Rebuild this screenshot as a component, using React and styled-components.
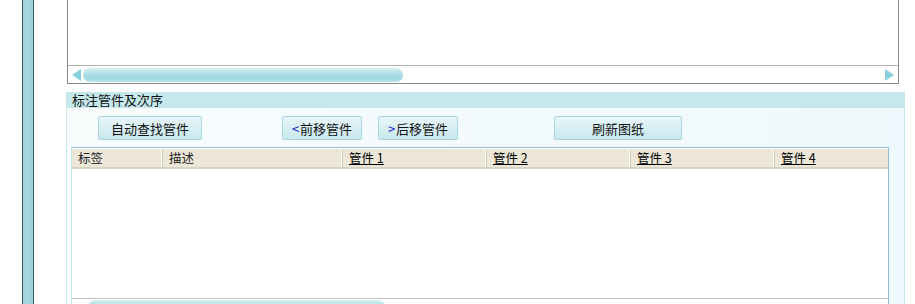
import styled, { createGlobalStyle } from 'styled-components'

const GlobalStyle = createGlobalStyle`
  html, body {
    margin: 0;
    padding: 0;
    background: #fff;
    font-family: "Noto Sans CJK SC", "Noto Sans", sans-serif;
    overflow: hidden;
  }
`

const columns = [
  { title: '标签', width: 91 },
  { title: '描述', width: 180 },
  { title: '管件 1', width: 144, link: true },
  { title: '管件 2', width: 144, link: true },
  { title: '管件 3', width: 144, link: true },
  { title: '管件 4', width: 113, link: true },
]

const buttons = [
  { label: '自动查找管件', width: 104, before: 31 },
  { label: '前移管件', width: 80, before: 80, arrow: '<' },
  { label: '后移管件', width: 80, before: 16, arrow: '>' },
  { label: '刷新图纸', width: 128, before: 96 },
]

export default function App() {
  return (
    <Page>
      <GlobalStyle />
      <SideStrip />
      <Main>
        <TopPanel>
          <Canvas />
          <ScrollBar>
            <Arrow dir="left" />
            <Thumb width={320} />
            <Spacer />
            <Arrow dir="right" />
          </ScrollBar>
        </TopPanel>

        <Section>
          <SectionTitle>标注管件及次序</SectionTitle>
          <SectionBody>
            <ButtonRow>
              {buttons.map((b) => (
                <Button key={b.label} width={b.width} before={b.before}>
                  {b.arrow && <ArrowText>{b.arrow}</ArrowText>}
                  {b.label}
                </Button>
              ))}
            </ButtonRow>
            <Table>
              <HeaderRow>
                {columns.map((c) => (
                  <HeaderCell key={c.title} width={c.width} link={c.link}>
                    <span>{c.title}</span>
                  </HeaderCell>
                ))}
              </HeaderRow>
              <TableBody />
              <BottomScroll>
                <Thumb width={297} />
              </BottomScroll>
            </Table>
          </SectionBody>
        </Section>
      </Main>
    </Page>
  )
}

const Page = styled.div`
  display: flex;
  width: 915px;
  height: 304px;
  overflow: hidden;
  background: #fff;
`

const SideStrip = styled.div`
  width: 10px;
  margin-left: 22px;
  border-left: 1px solid #3f5f66;
  border-right: 1px solid #3f5f66;
  background: linear-gradient(90deg, #9fd3da, #a6d8de 50%, #98cfd6);
`

const Main = styled.div`
  margin-left: 32px;
  width: 839px;
  display: flex;
  flex-direction: column;
`

const TopPanel = styled.div`
  flex-shrink: 0;
  margin-left: 1px;
  width: 830px;
  height: 83px;
  border: 1px solid #8a8a8a;
  border-top: none;
  display: flex;
  flex-direction: column;
  background: #fff;
`

const Canvas = styled.div`
  height: 65px;
  flex-shrink: 0;
  border-bottom: 1px solid #b4b4b4;
`

const ScrollBar = styled.div`
  flex: 1;
  display: flex;
  align-items: center;
  padding: 0 4px;
`

const Spacer = styled.div`
  flex: 1;
`

const Arrow = styled.div`
  width: 0;
  height: 0;
  border-top: 6px solid transparent;
  border-bottom: 6px solid transparent;
  ${(p) =>
    p.dir === 'left'
      ? 'border-right: 9px solid #86d2dc; margin-right: 2px;'
      : 'border-left: 9px solid #86d2dc;'}
`

const Thumb = styled.div`
  width: ${(p) => p.width}px;
  height: 14px;
  border-radius: 7px;
  flex-shrink: 0;
  background: linear-gradient(180deg, #d6f0f3 0%, #b4e2e8 35%, #9dd7df 70%, #b9e4ea 100%);
`

const Section = styled.div`
  flex-shrink: 0;
  margin-top: 8px;
  display: flex;
  flex-direction: column;
`

const SectionTitle = styled.div`
  height: 16px;
  line-height: 16px;
  padding-left: 6px;
  background: #c4e8ec;
  font-size: 13px;
  color: #111;
`

const SectionBody = styled.div`
  border-left: 1px solid #c9e6ef;
  border-right: 1px solid #c9e6ef;
  background: linear-gradient(90deg, #f8fcfd, #eef8fc);
  display: flex;
  flex-direction: column;
`

const ButtonRow = styled.div`
  display: flex;
  padding-top: 8px;
  height: 24px;
`

const Button = styled.div`
  box-sizing: border-box;
  width: ${(p) => p.width}px;
  margin-left: ${(p) => p.before}px;
  height: 24px;
  border: 1px solid #a9d6e2;
  border-radius: 2px;
  background: linear-gradient(180deg, #e9f6f9 0%, #d8eff3 50%, #c9e8ee 100%);
  display: flex;
  align-items: center;
  justify-content: center;
  font-size: 13px;
  color: #111;
`

const ArrowText = styled.span`
  color: #1a1acc;
  margin-right: 1px;
`

const Table = styled.div`
  margin: 7px 0 0 4px;
  width: 816px;
  border-left: 1px solid #c3e2ee;
  border-top: 1px solid #8fbfd6;
  border-right: 1px solid #8fbfd6;
  background: #fff;
  display: flex;
  flex-direction: column;
  padding-top: 1px;
`

const HeaderRow = styled.div`
  display: flex;
  height: 18px;
  background: #ece7d8;
  border-bottom: 2px solid #d8d3c1;
`

const HeaderCell = styled.div`
  box-sizing: border-box;
  width: ${(p) => p.width}px;
  padding-left: 6px;
  border-right: 1px solid #d2ccb8;
  box-shadow: inset -1px 0 0 #fff;
  font-size: 12.5px;
  line-height: 18px;
  color: #222;
  white-space: nowrap;

  &:last-child {
    border-right: none;
    box-shadow: none;
  }

  span {
    text-decoration: ${(p) => (p.link ? 'underline' : 'none')};
    color: ${(p) => (p.link ? '#000' : '#222')};
  }
`

const TableBody = styled.div`
  height: 129px;
  border-bottom: 1px solid #c0c0c0;
`

const BottomScroll = styled.div`
  padding: 1px 0 0 16px;
  height: 20px;
`
